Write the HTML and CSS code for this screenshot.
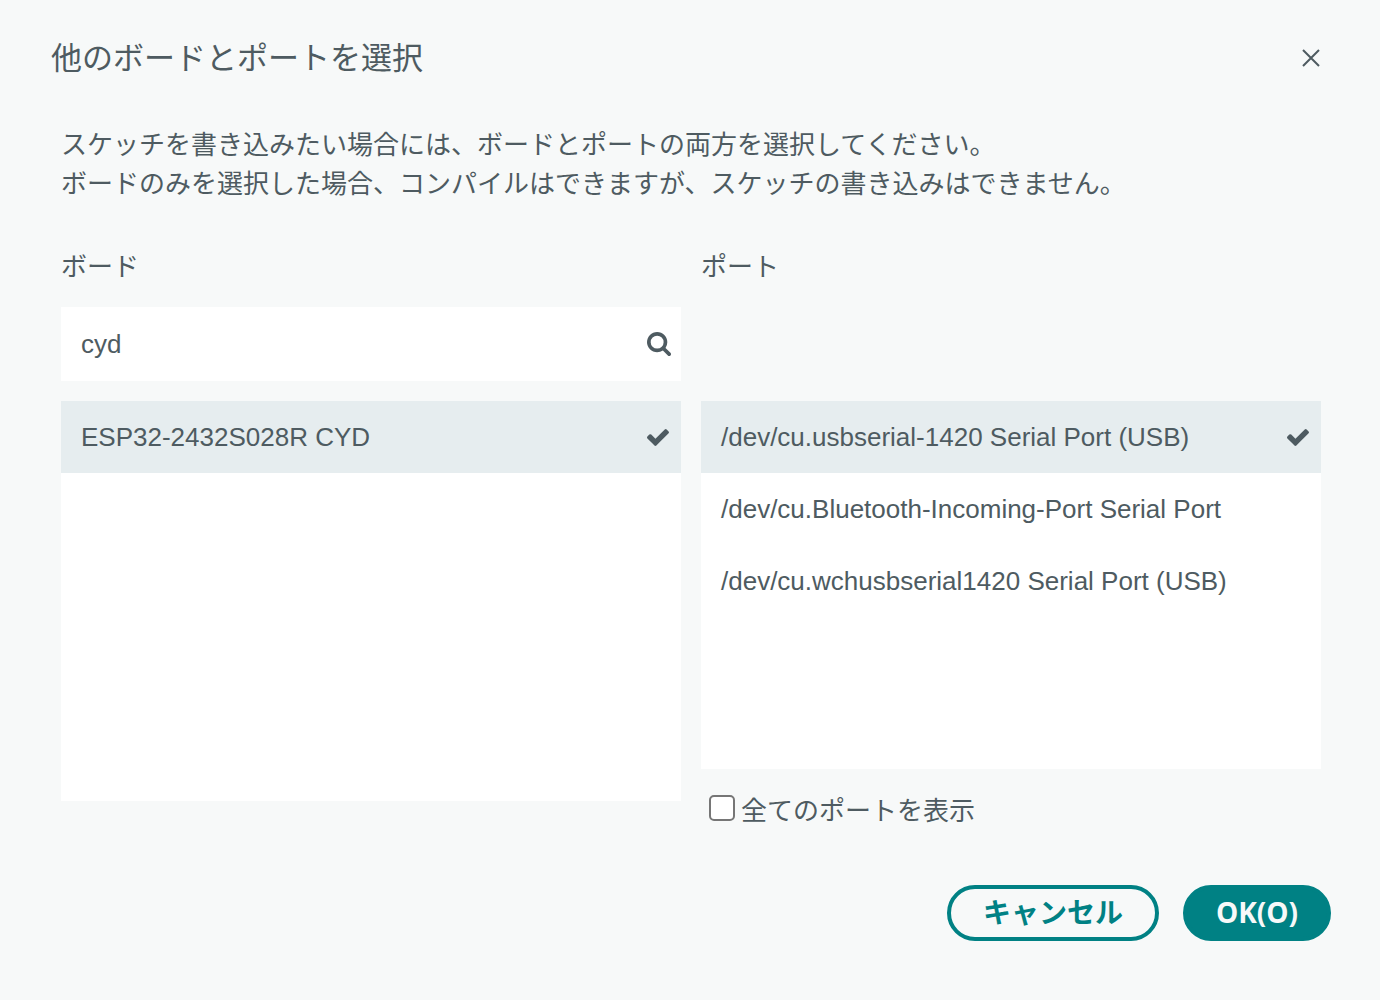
FILE: index.html
```html
<!DOCTYPE html>
<html lang="ja">
<head>
<meta charset="utf-8">
<title>他のボードとポートを選択</title>
<link rel="stylesheet" href="styles.css">
</head>
<body>
<main class="dialog" role="dialog" aria-labelledby="dialog-title">
  <header class="dialog-header">
    <h1 class="dialog-title" id="dialog-title">他のボードとポートを選択</h1>
    <button class="close-button" type="button" aria-label="閉じる">
      <svg width="20" height="20" viewBox="0 0 20 20" fill="none" stroke="currentColor" stroke-width="2" aria-hidden="true"><path d="M2 2l16 16M18 2L2 18"/></svg>
    </button>
  </header>
  <div class="dialog-body">
    <p class="description">スケッチを書き込みたい場合には、ボードとポートの両方を選択してください。<br>ボードのみを選択した場合、コンパイルはできますが、スケッチの書き込みはできません。</p>
    <div class="columns">
      <section class="column">
        <h2 class="column-title"><label for="board-search">ボード</label></h2>
        <div class="search">
          <input class="search-input" id="board-search" type="text" value="cyd">
          <svg class="icon" width="24" height="24" viewBox="0 0 1664 1664" fill="currentColor" aria-hidden="true"><path d="M1152 704q0-185-131.500-316.500T704 256 387.500 387.500 256 704t131.500 316.500T704 1152t316.500-131.500T1152 704zm512 832q0 52-38 90t-90 38q-54 0-90-38l-343-342q-179 124-399 124-143 0-273.500-55.500t-225-150-150-225T0 704t55.500-273.500 150-225 225-150T704 0t273.500 55.500 225 150 150 225T1408 704q0 220-124 399l343 343q37 37 37 90z"/></svg>
        </div>
        <ul class="list board-list">
          <li><button class="item selected" type="button"><span>ESP32-2432S028R CYD</span><svg class="icon" width="22" height="17" viewBox="0 0 1550 1188" fill="currentColor" aria-hidden="true"><path d="M1550 232q0 40-28 68l-724 724-136 136q-28 28-68 28t-68-28l-136-136L28 662Q0 634 0 594t28-68l136-136q28-28 68-28t68 28l294 295 656-657q28-28 68-28t68 28l136 136q28 28 28 68z"/></svg></button></li>
        </ul>
      </section>
      <section class="column">
        <h2 class="column-title">ポート</h2>
        <ul class="list port-list">
          <li><button class="item selected" type="button"><span>/dev/cu.usbserial-1420 Serial Port (USB)</span><svg class="icon" width="22" height="17" viewBox="0 0 1550 1188" fill="currentColor" aria-hidden="true"><path d="M1550 232q0 40-28 68l-724 724-136 136q-28 28-68 28t-68-28l-136-136L28 662Q0 634 0 594t28-68l136-136q28-28 68-28t68 28l294 295 656-657q28-28 68-28t68 28l136 136q28 28 28 68z"/></svg></button></li>
          <li><button class="item" type="button">/dev/cu.Bluetooth-Incoming-Port Serial Port</button></li>
          <li><button class="item" type="button">/dev/cu.wchusbserial1420 Serial Port (USB)</button></li>
        </ul>
        <label class="show-all"><input class="checkbox" type="checkbox"><span>全てのポートを表示</span></label>
      </section>
    </div>
  </div>
  <footer class="dialog-footer">
    <button class="button secondary" type="button">キャンセル</button>
    <button class="button primary" type="button">OK(O)</button>
  </footer>
</main>
</body>
</html>
```
FILE: styles.css
```css
* {
  box-sizing: border-box;
}

body {
  margin: 0;
  background: #f7f9f9;
  color: #4e5b61;
  font-family: "Liberation Sans", "Noto Sans CJK JP", sans-serif;
  font-size: 26px;
  line-height: 39px;
}

button,
input {
  margin: 0;
  color: inherit;
  font: inherit;
}

.dialog {
  min-height: 100vh;
  padding: 36px 49px 40px 51px;
}

.dialog-header {
  display: flex;
  align-items: center;
  justify-content: space-between;
  height: 44px;
}

.dialog-title {
  margin: 0;
  font-size: 31px;
  font-weight: 400;
}

.close-button {
  display: flex;
  padding: 10px;
  border: 0;
  background: none;
}

.dialog-body {
  padding: 46px 10px 0;
}

.description {
  margin: 0;
}

.columns {
  display: grid;
  grid-template-columns: 1fr 1fr;
  gap: 20px;
  padding-top: 44px;
}

.column {
  display: flex;
  flex-direction: column;
}

.column-title {
  margin: 0;
  font-size: 26px;
  font-weight: 400;
}

.search {
  display: flex;
  align-items: center;
  height: 74px;
  margin-top: 20px;
  padding: 0 10px 0 20px;
  background: #fff;
}

.search-input {
  flex: 1;
  min-width: 0;
  padding: 0;
  border: 0;
  outline: 0;
  background: none;
}

.list {
  margin: 0;
  padding: 0;
  background: #fff;
  list-style: none;
}

.board-list {
  min-height: 400px;
  margin-top: 20px;
}

.port-list {
  min-height: 368px;
  margin-top: 114px;
}

.item {
  display: flex;
  align-items: center;
  justify-content: space-between;
  width: 100%;
  height: 72px;
  padding: 0 12px 0 20px;
  border: 0;
  background: none;
  text-align: left;
}

.selected {
  background: #e6edef;
}

.icon {
  flex: none;
}

.show-all {
  display: flex;
  align-items: flex-start;
  gap: 6px;
  margin-top: 23px;
  padding-left: 8px;
}

.checkbox {
  width: 26px;
  height: 26px;
  margin-top: 3px;
  border: 2px solid #767676;
  border-radius: 5px;
  background: #fff;
  appearance: none;
}

.checkbox:checked {
  background: #008184;
}

.dialog-footer {
  display: flex;
  justify-content: flex-end;
  gap: 24px;
  padding-top: 54px;
}

.button {
  height: 56px;
  padding: 0 32px 2px;
  border: 4px solid #008184;
  border-radius: 28px;
  font-family: "Open Sans", "Noto Sans CJK JP", sans-serif;
  font-size: 28px;
  font-weight: 700;
}

.primary {
  min-width: 148px;
  padding: 0 24px 2px;
  background: #008184;
  color: #f7f9f9;
}

.secondary {
  background: none;
  color: #008184;
}
```
